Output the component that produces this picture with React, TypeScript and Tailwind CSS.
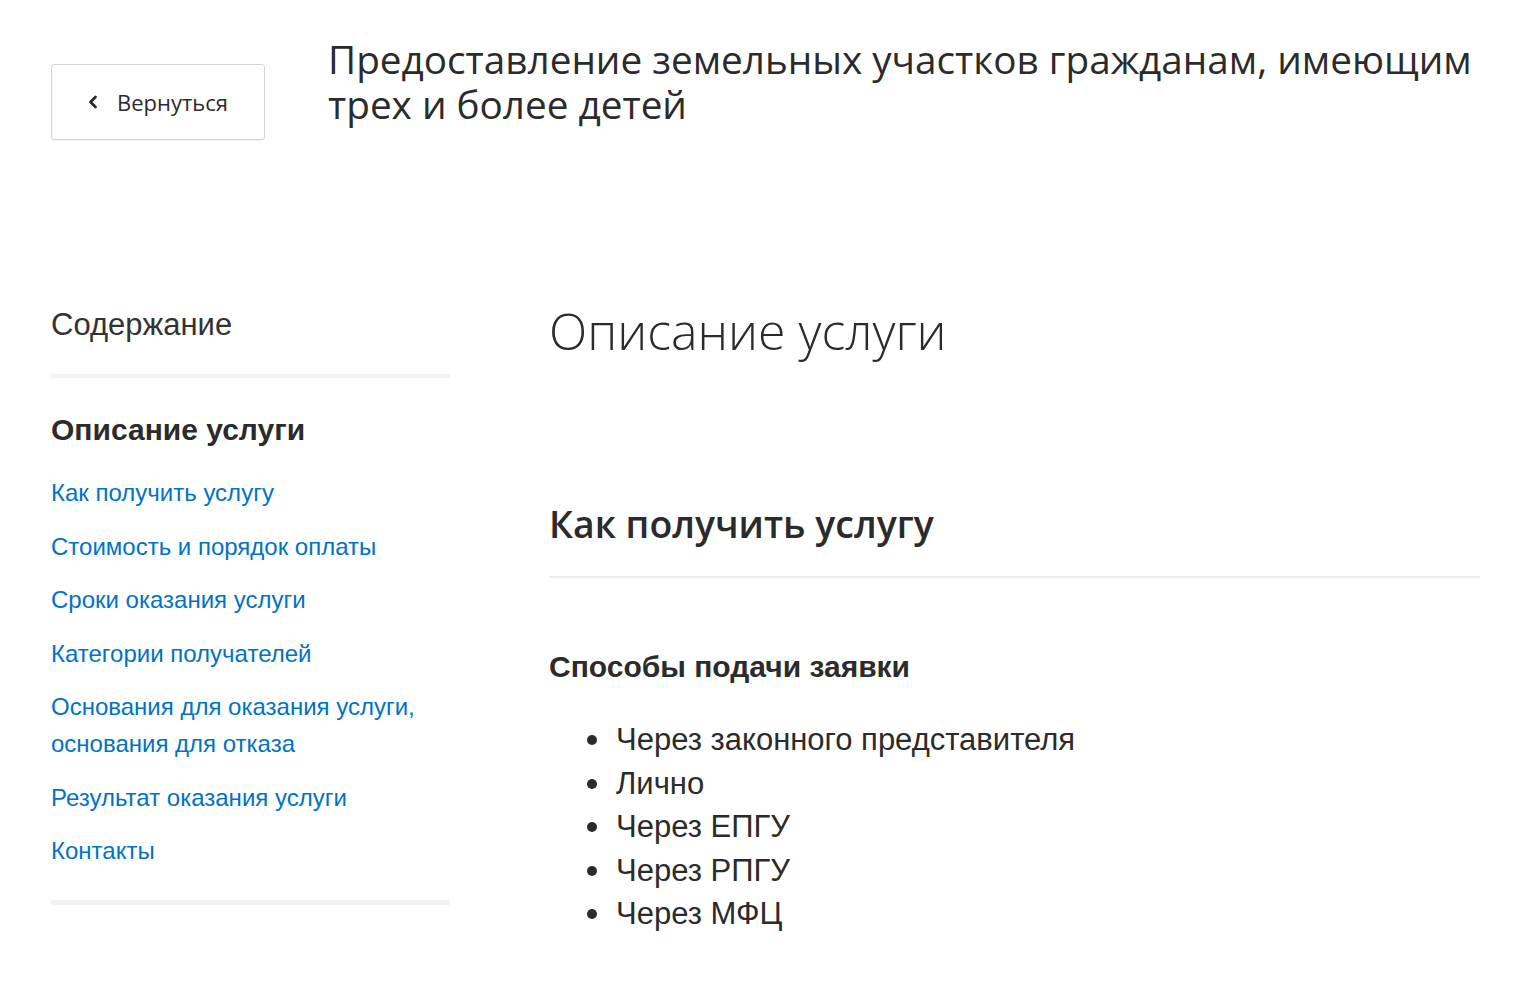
import React from "react";

const links: string[][] = [
  ["Как получить услугу"],
  ["Стоимость и порядок оплаты"],
  ["Сроки оказания услуги"],
  ["Категории получателей"],
  ["Основания для оказания услуги,", "основания для отказа"],
  ["Результат оказания услуги"],
  ["Контакты"],
];

const methods = [
  "Через законного представителя",
  "Лично",
  "Через ЕПГУ",
  "Через РПГУ",
  "Через МФЦ",
];

export default function App() {
  return (
    <div className="min-h-[992px] w-[1520px] bg-white text-[#2b2b2b]">
      <div className="flex items-start pl-[51px] pt-[37px]">
        <button className="mt-[27px] flex h-[76px] w-[214px] items-center rounded-[3px] border border-[#d6d6d6] bg-white pl-[34px] text-[22px] font-medium text-[#2b2b2b] [font-family:'Open_Sans',sans-serif] shadow-[0_1px_1px_rgba(0,0,0,0.06)]">
          <svg width="14" height="18" viewBox="0 0 14 18" className="mr-[17px]">
            <path d="M9.5 4 L4.5 9 L9.5 14" fill="none" stroke="#2b2b2b" strokeWidth="2.8" strokeLinecap="round" strokeLinejoin="round" />
          </svg>
          Вернуться
        </button>
        <h1 className="ml-[63px] text-[38.7px] leading-[45px] font-medium text-[#2b2b2b] [font-family:'Open_Sans',sans-serif]">
          Предоставление земельных участков гражданам, имеющим
          <br />
          трех и более детей
        </h1>
      </div>

      <div className="mt-[168px] flex pl-[51px]">
        <aside className="w-[399px] shrink-0 [font-family:'Liberation_Sans',Arial,sans-serif]">
          <div className="text-[31px] leading-[34px] text-[#333]">Содержание</div>
          <div className="mt-[32px] h-[4px] bg-[#f2f2f2]" />
          <div className="mt-[35px] text-[30px] leading-[34px] font-bold text-[#2b2b2b]">
            Описание услуги
          </div>
          <ul className="mt-[27px] flex flex-col gap-[16.5px]">
            {links.map((l, i) => (
              <li key={i} className="text-[24px] leading-[37px] text-[#0173c1]">
                {l.map((line, j) => (
                  <div key={j}>{line}</div>
                ))}
              </li>
            ))}
          </ul>
          <div className="mt-[31px] h-[5px] bg-[#f2f2f2]" />
        </aside>

        <main className="ml-[99px] w-[931px]">
          <h2 className="mt-[-7px] text-[50px] leading-[60px] font-light text-[#2b2b2b] [font-family:'Open_Sans',sans-serif]">
            Описание услуги
          </h2>
          <h3 className="mt-[138px] text-[37.4px] leading-[50px] font-semibold text-[#2b2b2b] [font-family:'Open_Sans',sans-serif]">
            Как получить услугу
          </h3>
          <div className="mt-[27px] h-[2px] bg-[#ececec]" />
          <h4 className="mt-[72px] text-[30px] leading-[34px] font-bold text-[#2b2b2b] [font-family:'Liberation_Sans',Arial,sans-serif]">
            Способы подачи заявки
          </h4>
          <ul className="mt-[34px] pl-[67px] [font-family:'Liberation_Sans',Arial,sans-serif]">
            {methods.map((m) => (
              <li key={m} className="relative text-[31px] leading-[43.5px] text-[#2b2b2b]">
                <span className="absolute left-[-29px] top-[17px] h-[10px] w-[10px] rounded-full bg-[#2b2b2b]" />
                {m}
              </li>
            ))}
          </ul>
        </main>
      </div>
    </div>
  );
}
